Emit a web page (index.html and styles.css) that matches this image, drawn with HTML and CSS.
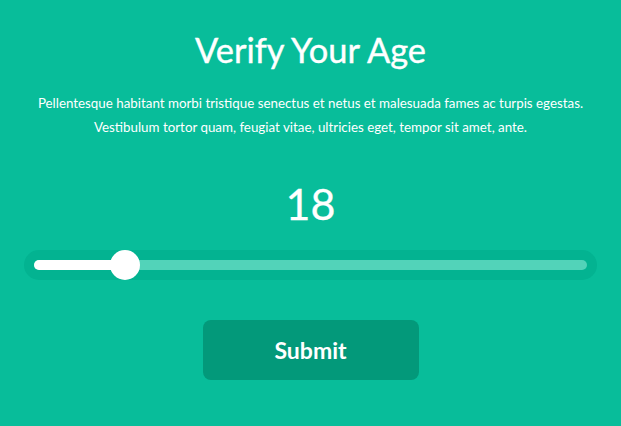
FILE: index.html
```html
<!DOCTYPE html>
<html>
<head>
<meta charset="utf-8">
<link rel="stylesheet" href="styles.css">
</head>
<body>
<main class="page">
  <h1 class="title">Verify Your Age</h1>
  <p class="lead">Pellentesque habitant morbi tristique senectus et netus et malesuada fames ac turpis egestas.<br>Vestibulum tortor quam, feugiat vitae, ultricies eget, tempor sit amet, ante.</p>
  <div class="age">18</div>
  <div class="slider">
    <div class="track">
      <div class="fill" style="width: 91px"></div>
      <div class="thumb" style="left: 91px"></div>
    </div>
  </div>
  <button class="submit" type="button">Submit</button>
</main>
</body>
</html>
```
FILE: styles.css
```css
html, body {
  margin: 0;
  padding: 0;
}
body {
  background: #08bd9a;
  font-family: Lato, "Open Sans", sans-serif;
  color: #ffffff;
  width: 621px;
  height: 426px;
  overflow: hidden;
}
.page {
  display: flex;
  flex-direction: column;
  align-items: center;
  padding: 30px 24px 0;
}
.title {
  margin: 0;
  font-size: 34.4px;
  line-height: 40px;
  font-weight: 400;
  -webkit-text-stroke: 0.4px #ffffff;
}
.lead {
  margin: 21px 0 0;
  font-size: 13.35px;
  line-height: 24px;
  text-align: center;
  white-space: nowrap;
}
.age {
  margin-top: 40px;
  font-size: 43px;
  line-height: 50px;
  -webkit-text-stroke: 0.3px #ffffff;
}
.slider {
  margin-top: 21px;
  align-self: stretch;
  height: 30px;
  border-radius: 15px;
  background: #03b391;
  padding: 10px;
  box-sizing: border-box;
}
.track {
  position: relative;
  height: 10px;
  border-radius: 5px;
  background: #52d3b9;
}
.fill {
  height: 10px;
  border-radius: 5px;
  background: #ffffff;
}
.thumb {
  position: absolute;
  top: -10px;
  width: 30px;
  height: 30px;
  margin-left: -15px;
  border-radius: 50%;
  background: #ffffff;
}
.submit {
  margin-top: 40px;
  width: 216px;
  height: 60px;
  border: 0;
  border-radius: 8px;
  background: #03997a;
  color: #ffffff;
  font-family: Lato, "Open Sans", sans-serif;
  font-size: 23px;
  font-weight: 700;
  padding: 0;
}
```
